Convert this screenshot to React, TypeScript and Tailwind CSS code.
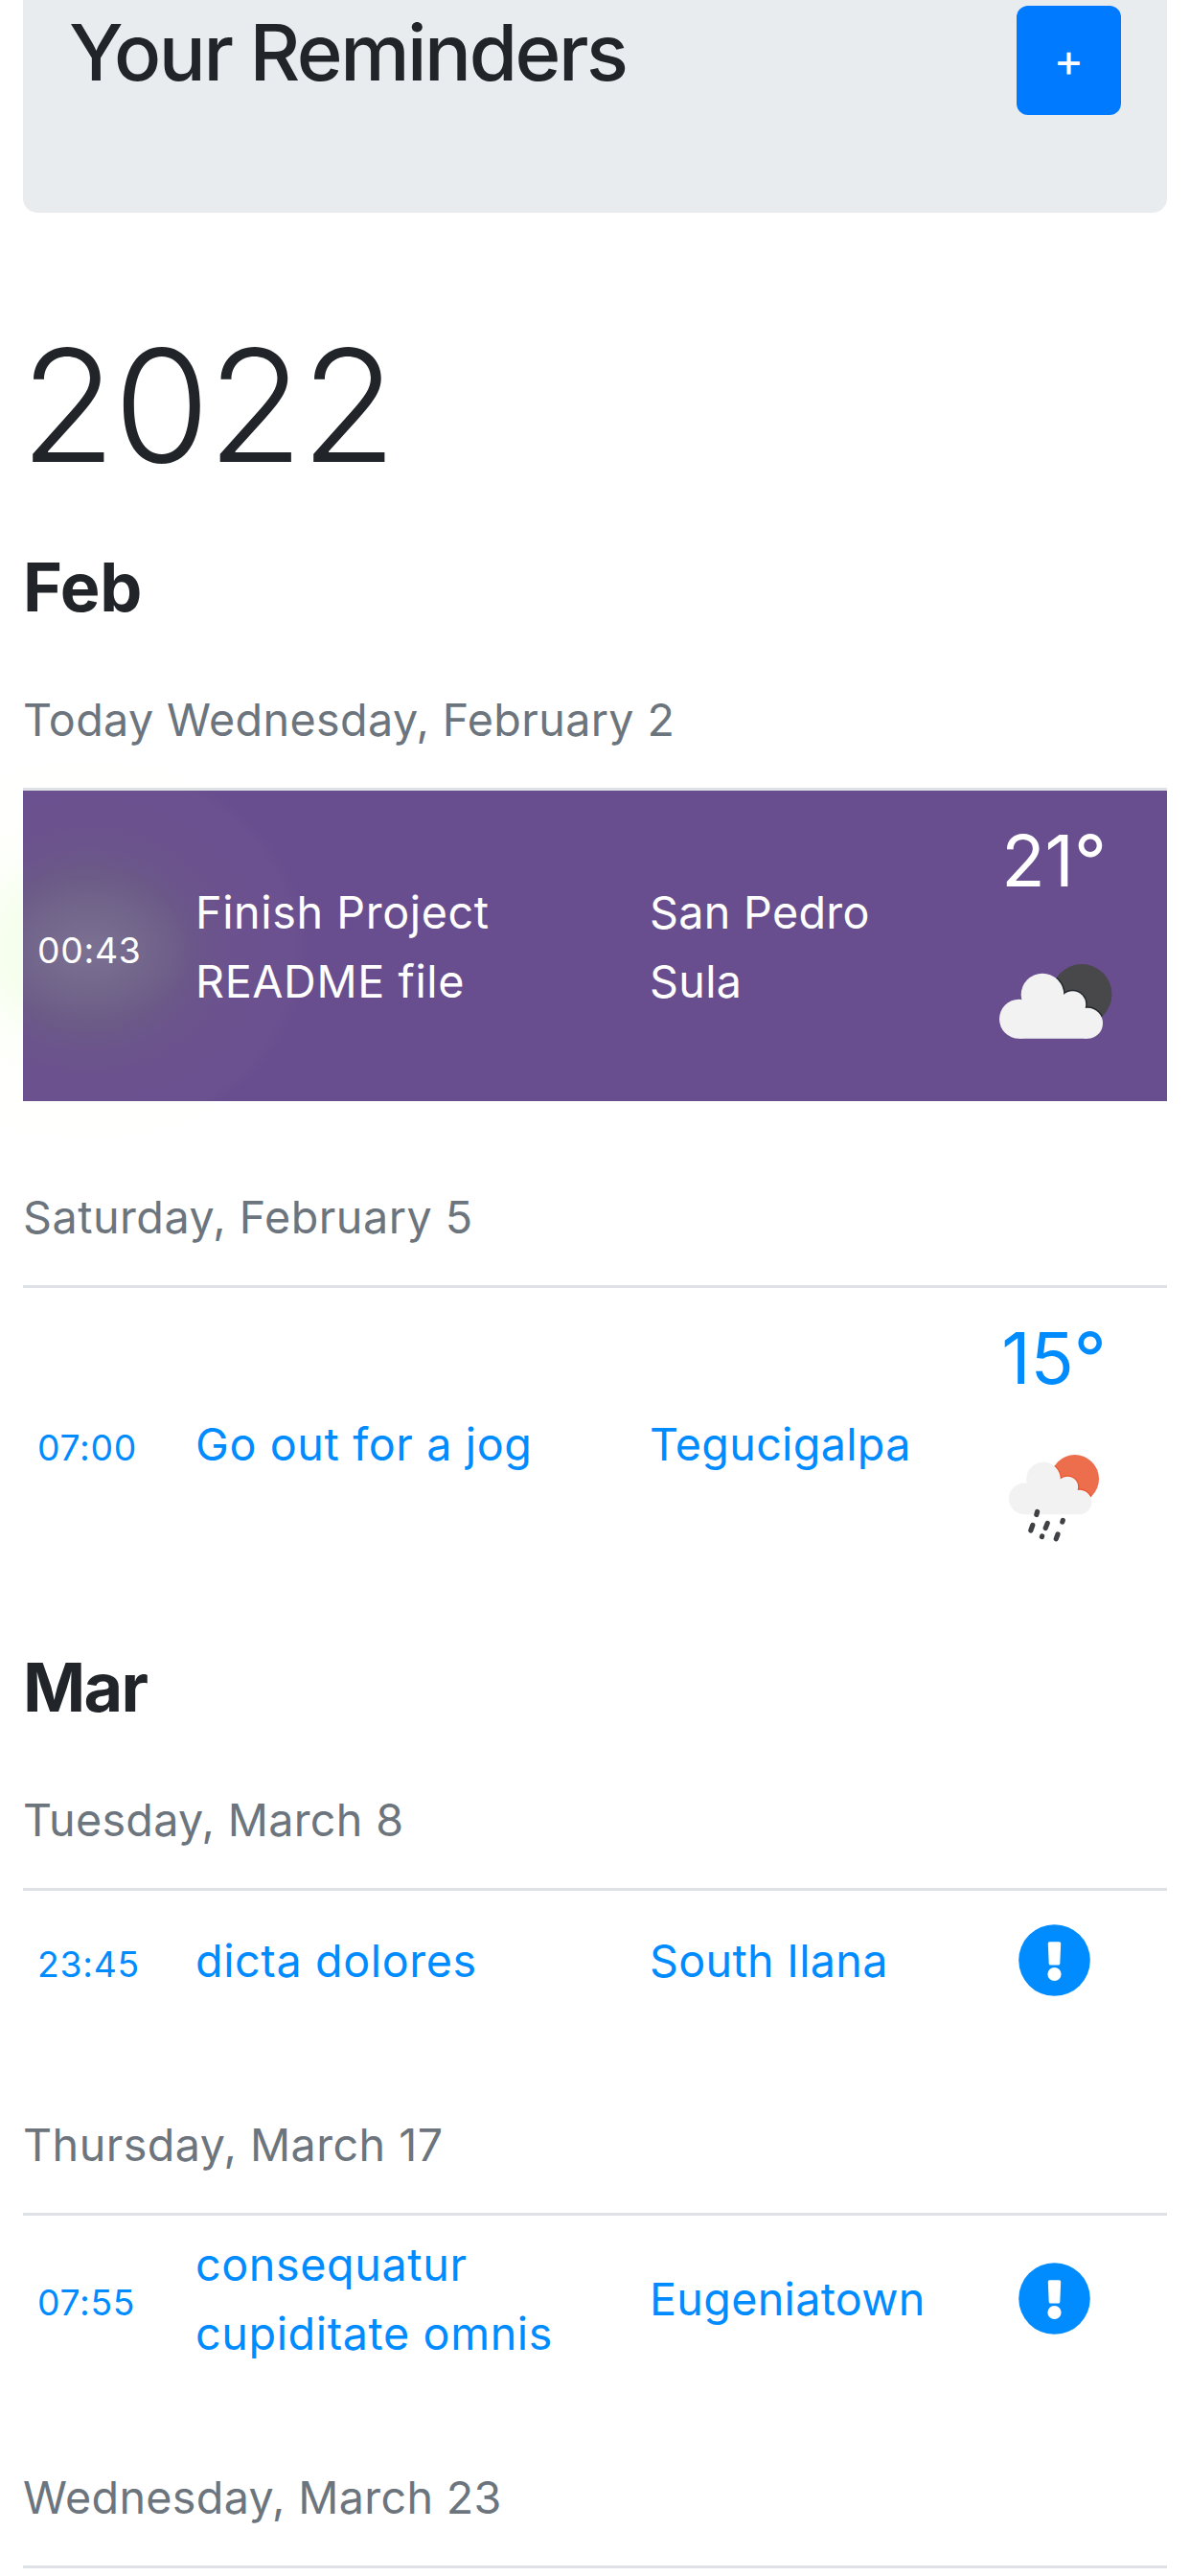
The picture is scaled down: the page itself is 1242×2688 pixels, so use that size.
import React from "react";

/* Cloud silhouette in a 108 x 78 box, shared by both weather drawings. */
function CloudShape() {
  return (
    <>
      <circle cx="45" cy="32" r="22.300" />
      <circle cx="20.500" cy="57.300" r="20.500" />
      <circle cx="76.500" cy="42" r="13.700" />
      <circle cx="92" cy="61.800" r="16" />
      <path d="M20.500 45 H70 V40 H82 L92 58 V77.800 H20.500 Z" />
    </>
  );
}

function CloudNight() {
  return (
    <svg className="ml-[3px] block h-[79px] w-[118px]" viewBox="0 0 118 79">
      <clipPath id="night-disc">
        <circle cx="86" cy="31.500" r="31.500" />
      </clipPath>
      <circle cx="86" cy="31.500" r="31.500" fill="#48484a" />
      <g clipPath="url(#night-disc)" fill="#23282e" stroke="#23282e" strokeWidth="3">
        <CloudShape />
      </g>
      <g fill="#f2f2f2">
        <CloudShape />
      </g>
    </svg>
  );
}

function CloudRain() {
  return (
    <svg className="ml-px block h-[91px] w-[95px]" viewBox="0 0 95 91">
      <clipPath id="day-disc">
        <circle cx="86" cy="31.500" r="31.500" />
      </clipPath>
      <g transform="scale(0.8)">
        <circle cx="86" cy="31.500" r="31.500" fill="#ec6e4c" />
        <g clipPath="url(#day-disc)" fill="#ea5330" stroke="#ea5330" strokeWidth="3">
          <CloudShape />
        </g>
        <g fill="#f2f2f2">
          <CloudShape />
        </g>
      </g>
      <g stroke="#3f4145" strokeWidth="5.200" strokeLinecap="round">
        <path d="M29.600 59.500 l-0.800 3" />
        <path d="M24.800 73.500 l-2 5.500" />
        <path d="M40.200 71.500 l-2 5" />
        <path d="M56.300 68.500 l-0.500 1.500" />
        <path d="M34.600 85 l-0.200 0.600" />
        <path d="M51 83 l-1.800 4.800" />
      </g>
    </svg>
  );
}

function Exclamation() {
  return (
    <svg className="block size-[75px]" viewBox="0 0 75 75">
      <circle cx="37.500" cy="37.500" r="37.300" fill="#008cff" />
      <path
        d="M32.500 18.200 h10 q1.800 0 1.700 1.800 l-.9 21 q-.1 1.500 -1.600 1.500 h-8.400 q-1.500 0 -1.600 -1.500 l-.9 -21 q-.1 -1.800 1.700 -1.800 Z"
        fill="#fff"
      />
      <circle cx="37.500" cy="52" r="7.100" fill="#fff" />
    </svg>
  );
}

function DateHeading({ text, className }: { text: string; className: string }) {
  return (
    <div className={`flex items-end border-b-[3px] border-[#dee2e6] pb-[35px] ${className}`}>
      <h3 className="text-[46.700px] leading-[72px] whitespace-nowrap text-[#6c757d]">{text}</h3>
    </div>
  );
}

type RowProps = {
  time: string;
  title: React.ReactNode;
  place: React.ReactNode;
  className: string;
  glow?: boolean;
  children: React.ReactNode;
};

function ReminderRow({ time, title, place, className, glow, children }: RowProps) {
  return (
    <div className={`relative flex items-center pl-[15px] ${className}`}>
      {glow && (
        <div className="pointer-events-none absolute -top-[34px] -left-[162px] h-[400px] w-[460px] bg-[radial-gradient(110px_76px_at_center,rgba(255,255,255,0.10),rgba(255,255,255,0)),radial-gradient(230px_200px_at_center,rgba(140,255,60,0.11)_0%,rgba(140,255,50,0.095)_25%,rgba(140,255,30,0.075)_38%,rgba(170,255,50,0.035)_54%,rgba(255,255,120,0.016)_72%,rgba(255,255,150,0.014)_94%,rgba(255,255,150,0)_100%)]" />
      )}
      <div className="relative w-[165px] pt-[9px] text-[37.300px] leading-[60px] tracking-[0.700px]">{time}</div>
      <div className="relative w-[474px] pt-px text-[46.700px] leading-[72px] tracking-[0.600px] whitespace-nowrap">{title}</div>
      <div className="relative w-[330px] pt-px text-[46.700px] leading-[72px] tracking-[0.300px] whitespace-nowrap">{place}</div>
      <div className="relative flex w-[184px] flex-col items-center self-stretch">{children}</div>
    </div>
  );
}

export default function App() {
  return (
    <div className="h-[2688px] w-[1242px] overflow-hidden bg-white px-6 font-['Inter',sans-serif] text-[#212529]">
      <header className="flex h-[222px] items-start justify-between rounded-b-[15px] bg-[#e9ecef] pr-12 pl-12">
        <h1 className="mt-[4px] text-[81.500px] leading-[101px] font-medium tracking-[-2.500px]">Your Reminders</h1>
        <button className="mt-[6px] flex h-[114px] w-[109px] items-center justify-center rounded-[12px] bg-[#007bff] text-[48px] leading-[72px] text-white">
          +
        </button>
      </header>

      <h2 className="mt-[100px] -ml-[3px] text-[163px] leading-[202px] font-light tracking-[-2.600px]">2022</h2>

      <h2 className="mt-[45px] text-[70px] leading-[87px] font-bold tracking-[-0.300px]">Feb</h2>
      <DateHeading text="Today Wednesday, February 2" className="h-[169px] tracking-[0.350px]" />
      <ReminderRow
        className="h-[324px] bg-[#694e8f] text-white"
        time="00:43"
        title={<>Finish Project<br />README file</>}
        place={<>San Pedro<br />Sula</>}
        glow
      >
        <div className="mt-[25px] mb-[60px] text-[74.500px] leading-[96px]">21°</div>
        <CloudNight />
      </ReminderRow>

      <DateHeading text="Saturday, February 5" className="h-[195px] tracking-[0.500px]" />
      <ReminderRow
        className="h-[324px] text-[#008cff]"
        time="07:00"
        title="Go out for a jog"
        place="Tegucigalpa"
      >
        <div className="mt-[25px] mb-[53px] text-[74.500px] leading-[96px]">15°</div>
        <CloudRain />
      </ReminderRow>

      <h2 className="mt-[49px] text-[70px] leading-[87px] font-bold tracking-[-1.700px]">Mar</h2>
      <DateHeading text="Tuesday, March 8" className="h-[169px] tracking-[0.300px]" />
      <ReminderRow
        className="h-[144px] text-[#008cff]"
        time="23:45"
        title="dicta dolores"
        place="South Ilana"
      >
        <div className="my-auto"><Exclamation /></div>
      </ReminderRow>

      <DateHeading text="Thursday, March 17" className="h-[195px] tracking-[0.450px]" />
      <ReminderRow
        className="h-[173px] text-[#008cff]"
        time="07:55"
        title={<>consequatur<br />cupiditate omnis</>}
        place="Eugeniatown"
      >
        <div className="my-auto"><Exclamation /></div>
      </ReminderRow>

      <DateHeading text="Wednesday, March 23" className="h-[195px] tracking-[0.320px]" />
    </div>
  );
}
